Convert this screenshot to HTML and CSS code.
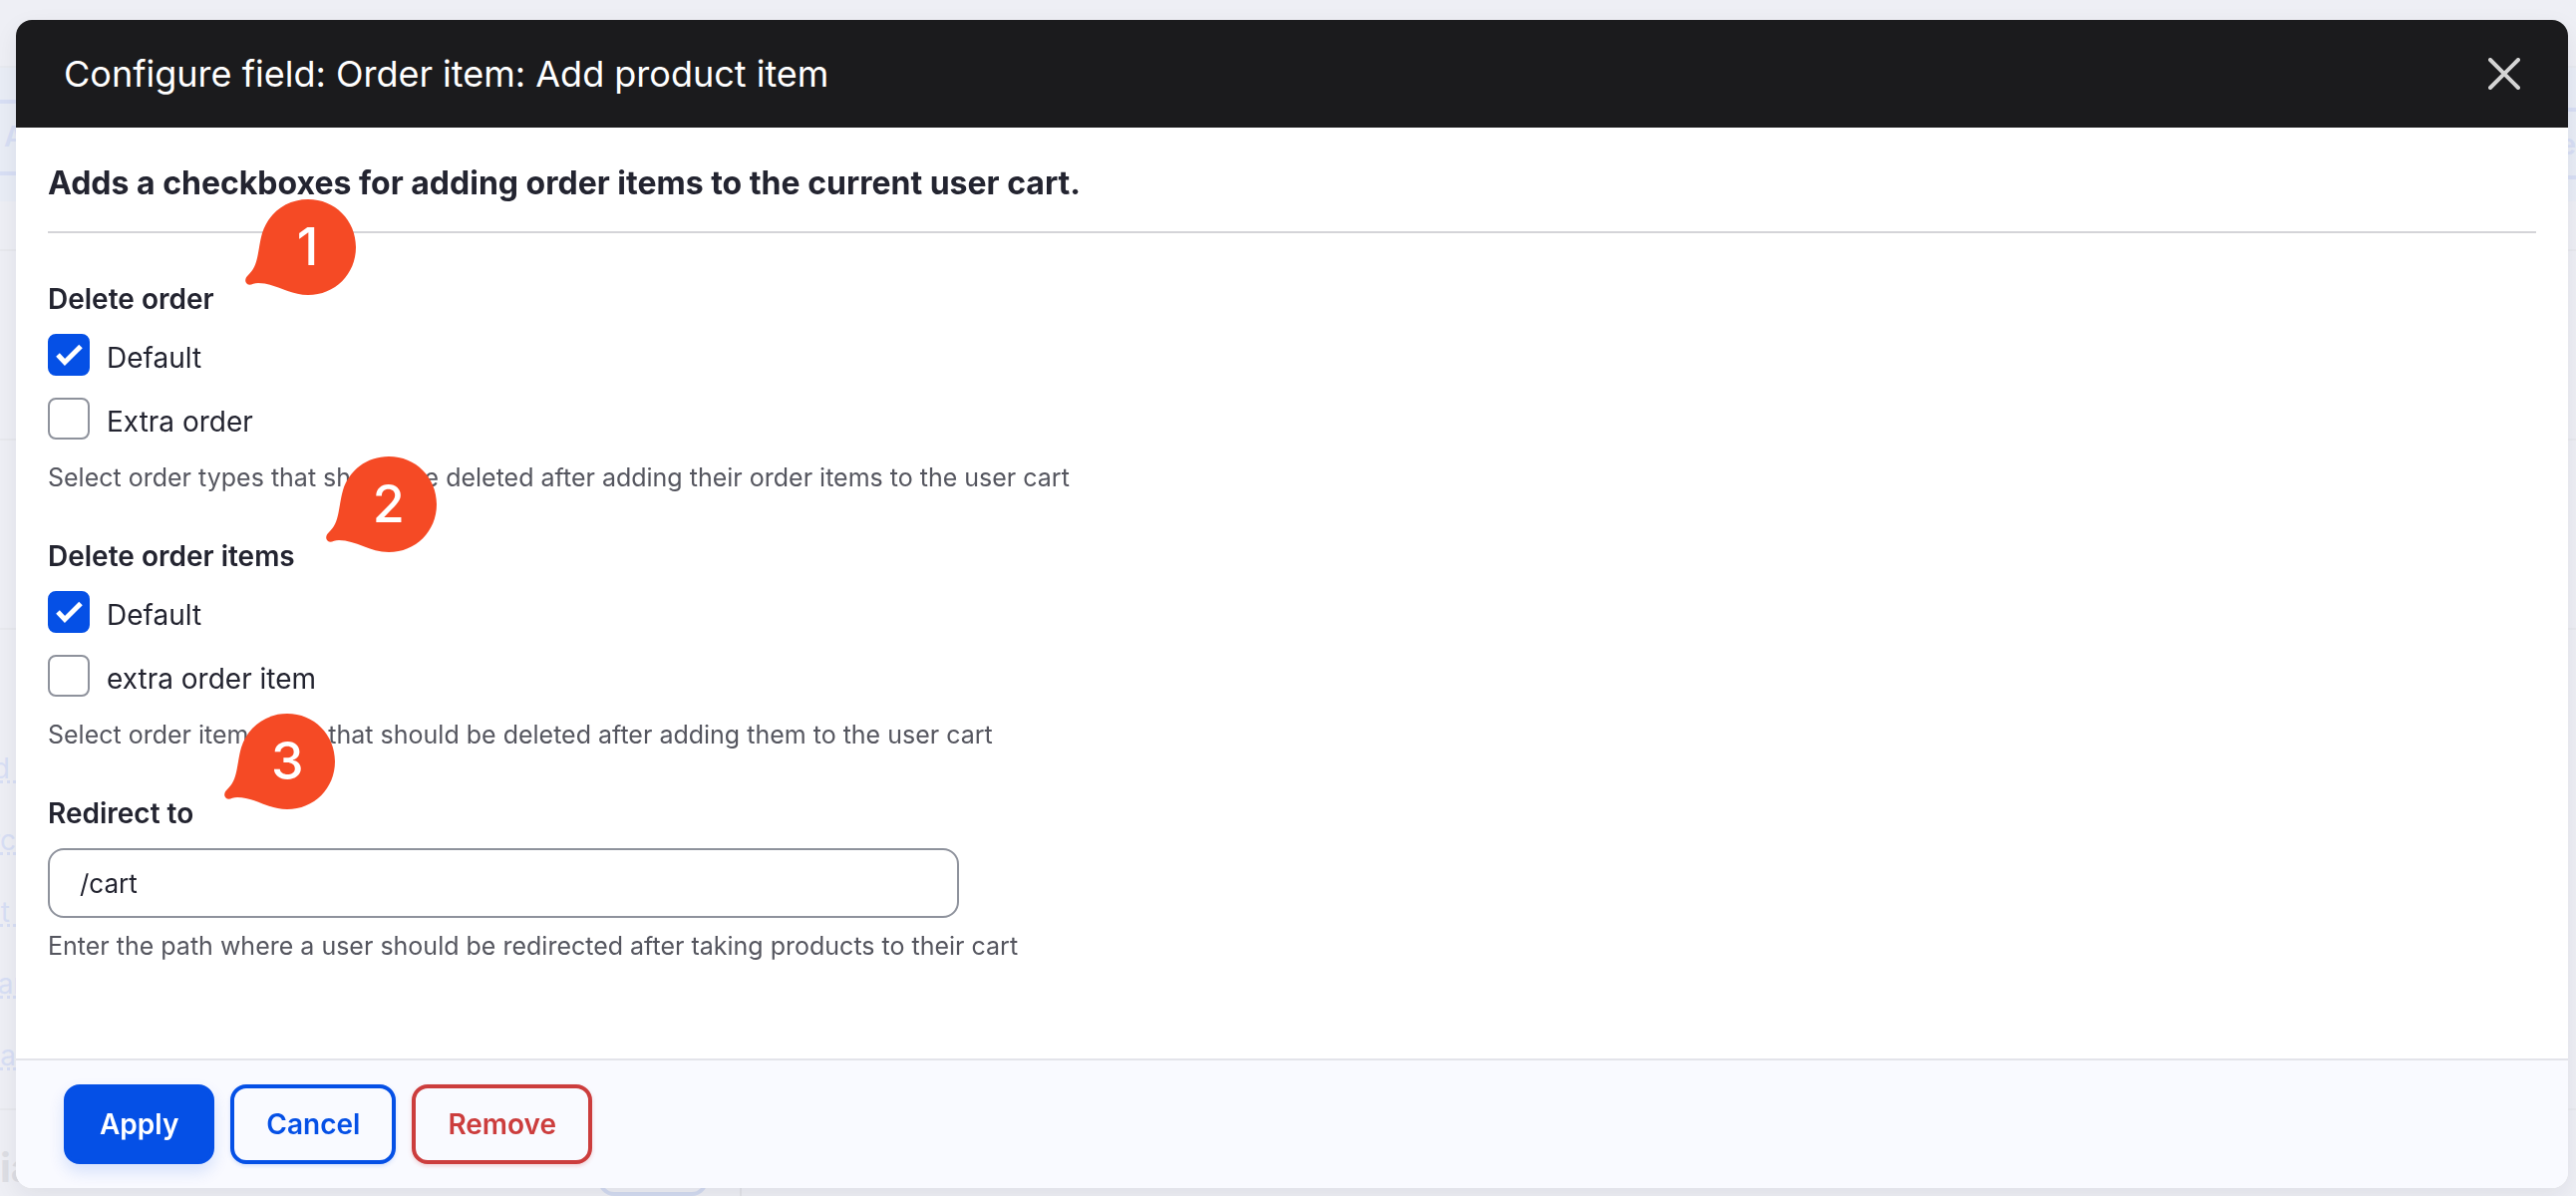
FILE: index.html
```html
<!DOCTYPE html>
<html lang="en">
<head>
<meta charset="utf-8">
<title>Configure field: Order item: Add product item</title>
<meta name="viewport" content="width=device-width, initial-scale=1">
<link rel="stylesheet" href="styles.css">
</head>
<body>
<div class="page" aria-hidden="true">
  <div class="page-tabs">
    <span class="page-button page-button-start">A</span>
    <span class="page-button page-button-end">e</span>
  </div>
  <div class="page-row"></div>
  <div class="page-row"></div>
  <div class="page-row"></div>
  <div class="page-list">
    <span class="page-link page-link-short">d</span>
    <span class="page-link">rc</span>
    <span class="page-link page-link-short">t</span>
    <span class="page-link page-link-long">ar</span>
    <span class="page-link">a</span>
  </div>
  <div class="page-bottom">
    <span class="page-title">ia</span>
    <span class="page-chip"></span>
    <span class="page-divider"></span>
  </div>
</div>

<div class="dialog" role="dialog" aria-labelledby="dialog-title">
  <header class="dialog-header">
    <h1 class="dialog-title" id="dialog-title">Configure field: Order item: Add product item</h1>
    <button class="close" type="button" aria-label="Close">
      <svg class="close-icon" viewBox="0 0 32 32"><path d="M2 2 30 30M30 2 2 30"/></svg>
    </button>
  </header>

  <form class="dialog-form">
    <div class="dialog-body">
      <p class="intro">Adds a checkboxes for adding order items to the current user cart.</p>

      <fieldset class="field">
        <legend class="legend"><span class="anchor">Delete order
          <span class="marker"><svg class="marker-shape" viewBox="0 0 112 96"><path d="M63 0C90 0 111 21 111 48S90 96 63 96C44 96 30 84 13 84C8 84 5 87 2 85C-1 82 0 79 3 76C14 66 12 52 17 34C23 14 41 0 63 0Z"/></svg><span class="marker-number">1</span></span></span></legend>
        <label class="option"><input class="checkbox" type="checkbox" checked>Default</label>
        <label class="option"><input class="checkbox" type="checkbox">Extra order</label>
        <p class="help">Select order types that should be deleted after adding their order items to the user cart</p>
      </fieldset>

      <fieldset class="field">
        <legend class="legend"><span class="anchor">Delete order items
          <span class="marker"><svg class="marker-shape" viewBox="0 0 112 96"><path d="M63 0C90 0 111 21 111 48S90 96 63 96C44 96 30 84 13 84C8 84 5 87 2 85C-1 82 0 79 3 76C14 66 12 52 17 34C23 14 41 0 63 0Z"/></svg><span class="marker-number">2</span></span></span></legend>
        <label class="option"><input class="checkbox" type="checkbox" checked>Default</label>
        <label class="option"><input class="checkbox" type="checkbox">extra order item</label>
        <p class="help">Select order item types that should be deleted after adding them to the user cart</p>
      </fieldset>

      <div class="field">
        <div class="legend"><span class="anchor"><label for="redirect">Redirect to</label><span class="marker"><svg class="marker-shape" viewBox="0 0 112 96"><path d="M63 0C90 0 111 21 111 48S90 96 63 96C44 96 30 84 13 84C8 84 5 87 2 85C-1 82 0 79 3 76C14 66 12 52 17 34C23 14 41 0 63 0Z"/></svg><span class="marker-number">3</span></span></span></div>
        <input class="text-input" id="redirect" type="text" value="/cart">
        <p class="help">Enter the path where a user should be redirected after taking products to their cart</p>
      </div>
    </div>

    <footer class="dialog-footer">
      <button class="button button-primary" type="button">Apply</button>
      <button class="button button-secondary" type="button">Cancel</button>
      <button class="button button-danger" type="button">Remove</button>
    </footer>
  </form>
</div>
</body>
</html>
```
FILE: styles.css
```css
* {
  box-sizing: border-box;
}

body {
  margin: 0;
  height: 100vh;
  overflow: hidden;
  background: #eeeff5;
  color: #232430;
  font-family: Inter, "Liberation Sans", sans-serif;
  font-size: 28px;
}

/* Page behind the dialog */
.page {
  color: #d8dff5;
}

.page-tabs {
  display: flex;
  justify-content: space-between;
  align-items: flex-start;
  height: 136px;
  margin-top: 66px;
  padding-top: 32px;
  border-top: 2px solid #e8eaf0;
  background: #e9edf6;
}

.page-button {
  width: 300px;
  height: 76px;
  padding: 0 4px;
  border-top: 4px solid #d8dff5;
  border-bottom: 4px solid #d8dff5;
  font-weight: 600;
  line-height: 66px;
}

.page-button-end {
  margin-top: 8px;
  height: 72px;
  padding: 0;
  text-align: right;
}

.page-row {
  height: 190px;
  border-bottom: 2px solid #e8e9ee;
}

.page-row:nth-child(2) {
  height: 50px;
}

.page-list {
  display: flex;
  flex-direction: column;
  align-items: flex-start;
  height: 482px;
  padding-top: 116px;
  border-bottom: 2px solid #e8e9ee;
}

.page-link {
  display: flex;
  justify-content: flex-end;
  width: 28px;
  height: 38px;
  margin-bottom: 34px;
  padding-right: 12px;
  border-bottom: 3px dotted #d8dff5;
  line-height: 46px;
}

.page-link-short {
  padding-right: 18px;
}

.page-link-long {
  padding-right: 4px;
}

.page-bottom {
  display: flex;
  height: 88px;
}

.page-title {
  width: 600px;
  color: #dddee4;
  font-size: 40px;
  font-weight: 700;
  line-height: 116px;
}

.page-chip {
  width: 110px;
  height: 86px;
  border: 4px solid #d3dbf1;
  border-radius: 16px;
}

.page-divider {
  margin-left: 32px;
  border-left: 2px solid #e2e3e9;
}

/* Dialog */
.dialog {
  position: fixed;
  inset: 20px 8px 8px 16px;
  display: flex;
  flex-direction: column;
  overflow: hidden;
  border-radius: 16px;
  background: #fff;
  box-shadow: 0 8px 24px rgba(34, 35, 48, 0.07);
}

.dialog-header {
  display: flex;
  align-items: center;
  justify-content: space-between;
  height: 108px;
  padding: 0 48px;
  background: #1b1b1d;
}

.dialog-title {
  margin: 0;
  color: #fff;
  font-size: 36px;
  font-weight: 400;
  line-height: 48px;
}

.close {
  display: flex;
  padding: 0;
  border: 0;
  background: none;
}

.close-icon {
  width: 32px;
  height: 32px;
  fill: none;
  stroke: #d4d4d4;
  stroke-width: 4;
  stroke-linecap: round;
}

.dialog-form {
  display: flex;
  flex: 1;
  flex-direction: column;
}

.dialog-body {
  flex: 1;
  padding: 32px;
}

.intro {
  margin: 0 0 48px;
  padding-bottom: 24px;
  border-bottom: 2px solid #d4d4d8;
  font-size: 32px;
  font-weight: 700;
  line-height: 48px;
}

.field {
  margin: 0 0 45px;
  padding: 0;
  border: 0;
}

.legend {
  padding: 0;
  margin-bottom: 17px;
  font-weight: 600;
  line-height: 36px;
}

.anchor {
  position: relative;
}

.option {
  display: flex;
  align-items: flex-start;
  gap: 17px;
  margin-bottom: 16px;
  line-height: 48px;
}

.checkbox {
  appearance: none;
  flex: none;
  width: 42px;
  height: 42px;
  margin: 0;
  border: 2px solid #8e929c;
  border-radius: 8px;
  background: #fff;
}

.checkbox:checked {
  border-color: #0550e6;
  background: #0550e6 url("data:image/svg+xml,%3Csvg xmlns='http://www.w3.org/2000/svg' viewBox='0 0 38 38'%3E%3Cpath d='M8 19 15 26.5 31 10.5' fill='none' stroke='white' stroke-width='5'/%3E%3C/svg%3E") center / 38px 38px no-repeat;
}

.help {
  margin: 0;
  color: #55565f;
  font-size: 25px;
  line-height: 32px;
}

.text-input {
  display: block;
  width: 914px;
  max-width: 100%;
  height: 70px;
  margin-bottom: 12px;
  padding: 0 30px;
  border: 2px solid #8e929c;
  border-radius: 16px;
  background: #fff;
  color: inherit;
  font: inherit;
  font-size: 26px;
}

/* Numbered callouts over the form */
.marker {
  position: absolute;
  bottom: 21px;
  left: calc(100% + 31px);
  display: flex;
  justify-content: center;
  width: 112px;
  height: 96px;
  padding-left: 14px;
  color: #fff;
  font-size: 52px;
  font-weight: 500;
  line-height: 96px;
}

.marker-shape {
  position: absolute;
  inset: 0;
  fill: #f54a25;
}

.marker-number {
  position: relative;
}

.dialog-footer {
  display: flex;
  gap: 16px;
  padding: 24px 48px;
  border-top: 2px solid #e3e4ea;
  background: #f9faff;
}

.button {
  height: 80px;
  padding: 0 32px;
  border: 4px solid;
  border-radius: 16px;
  background: #f9faff;
  font: inherit;
  font-weight: 600;
}

.button-primary {
  border-color: #0550e6;
  background: #0550e6;
  color: #fff;
  box-shadow: 0 8px 16px rgba(5, 80, 230, 0.14);
}

.button-secondary {
  border-color: #0550e6;
  color: #0550e6;
  box-shadow: 0 2px 4px rgba(5, 80, 230, 0.14);
}

.button-danger {
  border-color: #cc3d3d;
  color: #cc3d3d;
  box-shadow: 0 2px 4px rgba(204, 61, 61, 0.2);
}
```
